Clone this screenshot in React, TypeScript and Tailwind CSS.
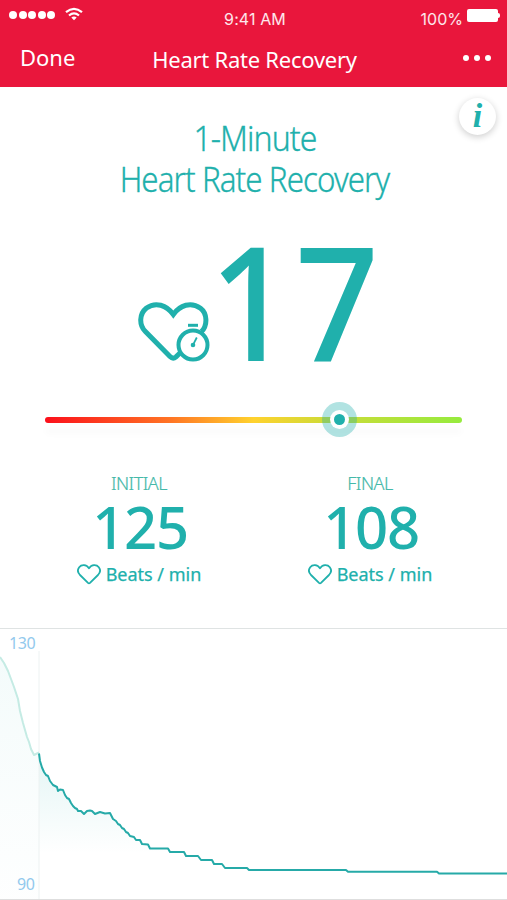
const LINE =
  'M39 124.500 L40 132 L42 138.500 L44 143 L46 146 L48 147 L50 152 L53 156 L55 157 L57 158 L58 162 L60 160.500 L63 161 L65 166 L67 169 L69 170 L71 174 L73 177 L75 179 L77 180 L78 182 L81 182 L84 185 L87 182 L90 181.500 L92 182 L95 185 L100 183 L105 184.500 L110 184 L113 190 L116 192 L118 195 L120 196 L122 199 L124 200 L126 203 L128 204 L130 207 L134 208 L136 211 L140 211 L142 215 L148 215.500 L150 219.500 L168 219.500 L170 223 L184 223 L186 227 L198 227 L201 231 L212 231 L214 235 L222 235 L225 239 L247 239 L249 241 L346 241 L348 242.700 L437 242.700 L439 244.500 L507 244.500';

const EARLY = 'M0 28 L4 34 L8 42 L11 50 L14 58 L18 70 L20 82 L23 94 L27 108 L29 113 L31 120 L34 126 L36 125 L39 123.500';

function Heart({ className }: { className?: string }) {
  return (
    <svg viewBox="0 0 24 21" className={className} fill="none" stroke="#20b0ac" strokeWidth="1.8" strokeLinejoin="round">
      <path d="M12 4.300 C9.500 .3 4.500 .2 2.200 3.200 C.3 5.700 .9 8.800 3 11 L11 18.900 Q12 19.800 13 18.900 L21 11 C23.100 8.800 23.700 5.700 21.800 3.200 C19.500 .2 14.500 .3 12 4.300 Z" />
    </svg>
  );
}

function Reading({ label, value }: { label: string; value: number }) {
  return (
    <div className="flex w-[150px] flex-col items-center">
      <span className="h-6 text-[18px] font-light leading-6 tracking-[-0.5px] text-[#45b9a9] [-webkit-text-stroke:0.2px_#45b9a9]">{label}</span>
      <span className="ml-[2px] mt-[3px] h-[58px] text-[58px] font-medium leading-[58px] tracking-[-1.4px]">{value}</span>
      <div className="mt-1.5 flex h-6 items-center gap-[5px]">
        <Heart className="h-[21px] w-6" />
        <span className="whitespace-nowrap text-[18px] leading-6 [-webkit-text-stroke:0.25px_#20b0ac]">Beats / min</span>
      </div>
    </div>
  );
}

export default function App() {
  return (
    <div className="flex h-[900px] w-[507px] flex-col overflow-hidden bg-white font-['Noto_Sans',sans-serif] text-[#20b0ac]">
      <header className="h-[87px] shrink-0 bg-[#e9163c] text-white">
        {/* Status bar */}
        <div className="grid h-9 grid-cols-3 font-['Inter',sans-serif] text-[16px] text-white/90">
          <div className="flex items-start gap-[10px] pl-[9px] pt-[7px]">
            <div className="flex gap-[1.500px] pt-[4px]">
              {[...Array(5)].map((_, i) => (
                <span key={i} className="size-2 rounded-full bg-white" />
              ))}
            </div>
            <svg viewBox="0 0 18 14" className="h-[14px] w-[18px]" fill="none" stroke="white" strokeWidth="2.2">
              <path d="M1 5.200 Q9 -1.500 17 5.200" />
              <path d="M4 8.500 Q9 4.200 14 8.500" />
              <path d="M6.300 10.600 Q9 8.300 11.700 10.600 L9 13.300 Z" fill="white" stroke="none" />
            </svg>
          </div>
          <span className="pl-[3px] pt-[7px] text-center leading-6 tracking-[0.1px]">9:41 AM</span>
          <div className="flex justify-end gap-1 pr-[7px] pt-[7px]">
            <span className="leading-6">100%</span>
            <div className="mt-[1.500px] flex h-[13px] items-center">
              <span className="h-[13px] w-[31px] rounded-[2px] border border-white/70 bg-white" />
              <span className="h-[5px] w-[2px] rounded-r bg-white" />
            </div>
          </div>
        </div>

        {/* Nav bar */}
        <div className="flex h-[43px] items-center justify-between pl-5 pr-4">
          <span className="w-[86px] text-[22px] leading-[43px]">Done</span>
          <span className="whitespace-nowrap pt-[3px] text-[22px] leading-[43px] tracking-[-0.25px]">Heart Rate Recovery</span>
          <div className="flex w-[88px] justify-end gap-[5px]">
            {[...Array(3)].map((_, i) => (
              <span key={i} className="size-1.5 rounded-full bg-white" />
            ))}
          </div>
        </div>
      </header>

      <main className="relative h-[541px] shrink-0">
        <button className="absolute right-[11px] top-[11px] flex size-[37px] items-center justify-center rounded-full bg-white pb-0.5 font-['Liberation_Serif',serif] text-[34px] font-bold italic leading-none shadow-[0_2px_7px_rgba(0,0,0,0.2)]">
          i
        </button>

        <h1 className="pt-[31px] text-center text-[34px] font-light leading-[41px] tracking-[-1px] [-webkit-text-stroke:0.3px_#20b0ac]">
          <span className="block scale-x-[0.94] pl-[3px]">1-Minute</span>
          <span className="block scale-x-[0.92] pl-0.5">Heart Rate Recovery</span>
        </h1>

        <div className="flex h-[157px] pl-[137px] pt-[26px]">
          <svg viewBox="0 0 74 62" className="mt-[75px] h-[62px] w-[74px] shrink-0" fill="none" stroke="#20b0ac" strokeWidth="5">
            <path d="M64.500 30.600 C71 24 70 12 63.500 7.200 C54 .5 43 4 36.300 13.500 C29.500 4 18.500 .5 9.500 7 C2 13 2 24 8.400 30.600 L33 55.500 Q36 58.500 39 55.800 L44 51" />
            <circle cx="56" cy="44" r="14.500" strokeWidth="4" fill="white" />
            <path d="M51 24.300 H61" strokeWidth="3" />
            <path d="M56 44 L59.800 36.500" strokeWidth="1.700" />
            <circle cx="56" cy="44" r="2.300" fill="#20b0ac" stroke="none" />
          </svg>
          <span className="-ml-[2px] -mt-[5px] h-[158px] origin-left scale-x-[0.93] text-[158px] font-medium leading-[158px] tracking-[2px]">17</span>
        </div>

        {/* Recovery scale */}
        <div className="mx-[45px] mt-[46px] flex h-[34px] items-center">
          <div className="relative h-[6px] w-full rounded-full bg-[linear-gradient(90deg,#fb101b_0%,#ff7424_30%,#ffd22e_50%,#cddb38_68%,#96eb3e_100%)] shadow-[0_11px_7px_rgba(0,0,0,0.025)]">
            <div className="absolute -top-[15px] left-[277px] flex size-[35px] items-center justify-center rounded-full bg-[#20b0ac]/35">
              <div className="flex size-[19px] items-center justify-center rounded-full bg-white">
                <div className="size-[11px] rounded-full bg-[#20b0ac]" />
              </div>
            </div>
          </div>
        </div>

        <div className="flex gap-[81px] pl-[64px] pt-[34px]">
          <Reading label="INITIAL" value={125} />
          <Reading label="FINAL" value={108} />
        </div>
      </main>

      <section className="relative h-[272px] shrink-0 border-b border-t border-b-[#dedede] border-t-[#dfe3e3]">
        <svg viewBox="0 0 507 270" className="h-[270px] w-[507px]" fill="none">
          <defs>
            <linearGradient id="early" x1="0" y1="0" x2="0" y2="1">
              <stop offset="0" stopColor="#20b0ac" stopOpacity="0.05" />
              <stop offset="1" stopColor="#20b0ac" stopOpacity="0.005" />
            </linearGradient>
            <linearGradient id="fall" x1="0" y1="126" x2="0" y2="225" gradientUnits="userSpaceOnUse">
              <stop offset="0" stopColor="#20b0ac" stopOpacity="0.12" />
              <stop offset="1" stopColor="#20b0ac" stopOpacity="0" />
            </linearGradient>
          </defs>
          <path d={`${EARLY} V270 H0 Z`} fill="url(#early)" />
          <path d={`${LINE} V270 H39 Z`} fill="url(#fall)" />
          <path d="M39 22 V270" stroke="#edf2f2" />
          <path d={EARLY} stroke="#c5ebe4" strokeWidth="2" strokeLinejoin="round" />
          <path d={LINE} stroke="#26aaa8" strokeWidth="2" strokeLinejoin="round" />
        </svg>
        <span className="absolute left-[9px] top-[3px] text-[16px] leading-[22px] tracking-[-0.4px] text-[#92c9ed]">130</span>
        <span className="absolute left-[17px] top-[244px] text-[16px] leading-[22px] tracking-[-0.4px] text-[#92c9ed]">90</span>
      </section>
    </div>
  );
}
